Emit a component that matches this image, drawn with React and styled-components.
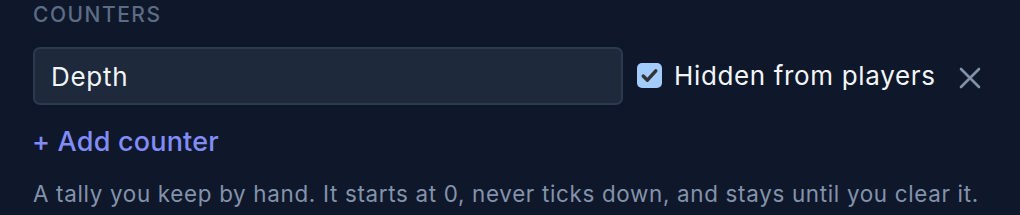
import React from 'react';
import styled, { createGlobalStyle } from 'styled-components';

const GlobalStyle = createGlobalStyle`
  html, body {
    margin: 0;
    padding: 0;
    background: #0f172a;
  }
  body {
    font-family: Inter, "Noto Sans", "Liberation Sans", sans-serif;
    -webkit-font-smoothing: antialiased;
  }
`;

const Section = styled.section`
  width: 1020px;
  height: 215px;
  box-sizing: border-box;
  padding: 2px 0 0 33px;
  background: #0f172a;
`;

const Heading = styled.h3`
  margin: 0 0 20px;
  font-size: 21px;
  line-height: 25px;
  font-weight: 500;
  letter-spacing: 0.072em;
  text-transform: uppercase;
  color: #5c6c84;
`;

const Row = styled.div`
  display: flex;
  align-items: center;
  gap: 14px;
`;

const NameInput = styled.input`
  width: 590px;
  height: 58px;
  box-sizing: border-box;
  padding: 0 16px;
  border: 2px solid #2c3a50;
  border-radius: 7px;
  background: #1e293b;
  color: #f1f5f9;
  font-family: inherit;
  font-size: 26px;
  letter-spacing: 0.7px;
  outline: none;
`;

const CheckLabel = styled.label`
  display: flex;
  align-items: center;
  gap: 12px;
  font-size: 26px;
  line-height: 32px;
  letter-spacing: 0.65px;
  color: #f1f5f9;
  margin-top: -1px;
`;

const Box = styled.span`
  width: 25px;
  height: 25px;
  border-radius: 5px;
  background: #a3cbfb;
  display: flex;
  align-items: center;
  justify-content: center;
`;

const RemoveButton = styled.button`
  margin-left: 9px;
  padding: 0;
  border: 0;
  background: none;
  display: flex;
  margin-top: 4px;
  cursor: pointer;
`;

const AddButton = styled.button`
  margin: 21px 0 0 -1px;
  padding: 0;
  border: 0;
  background: none;
  font-family: inherit;
  font-size: 27px;
  line-height: 32px;
  font-weight: 500;
  letter-spacing: 0.2px;
  color: #818cf8;
  cursor: pointer;
`;

const Help = styled.p`
  margin: 22px 0 0;
  font-size: 22.4px;
  line-height: 28px;
  letter-spacing: 0.68px;
  color: #8393ab;
`;

export default function App() {
  return (
    <>
      <GlobalStyle />
      <Section>
        <Heading>Counters</Heading>
        <Row>
          <NameInput defaultValue="Depth" />
          <CheckLabel>
            <Box>
              <svg width="21" height="21" viewBox="0 0 20 20" fill="none">
                <path d="M4 10.5l4 4 8-9" stroke="#333" strokeWidth="3.2" strokeLinecap="round" strokeLinejoin="round" />
              </svg>
            </Box>
            Hidden from players
          </CheckLabel>
          <RemoveButton aria-label="Remove counter">
            <svg width="22" height="22" viewBox="0 0 22 22" fill="none">
              <path d="M2 2l18 18M20 2L2 20" stroke="#8291a8" strokeWidth="2.6" strokeLinecap="round" />
            </svg>
          </RemoveButton>
        </Row>
        <AddButton>+ Add counter</AddButton>
        <Help>A tally you keep by hand. It starts at 0, never ticks down, and stays until you clear it.</Help>
      </Section>
    </>
  );
}
